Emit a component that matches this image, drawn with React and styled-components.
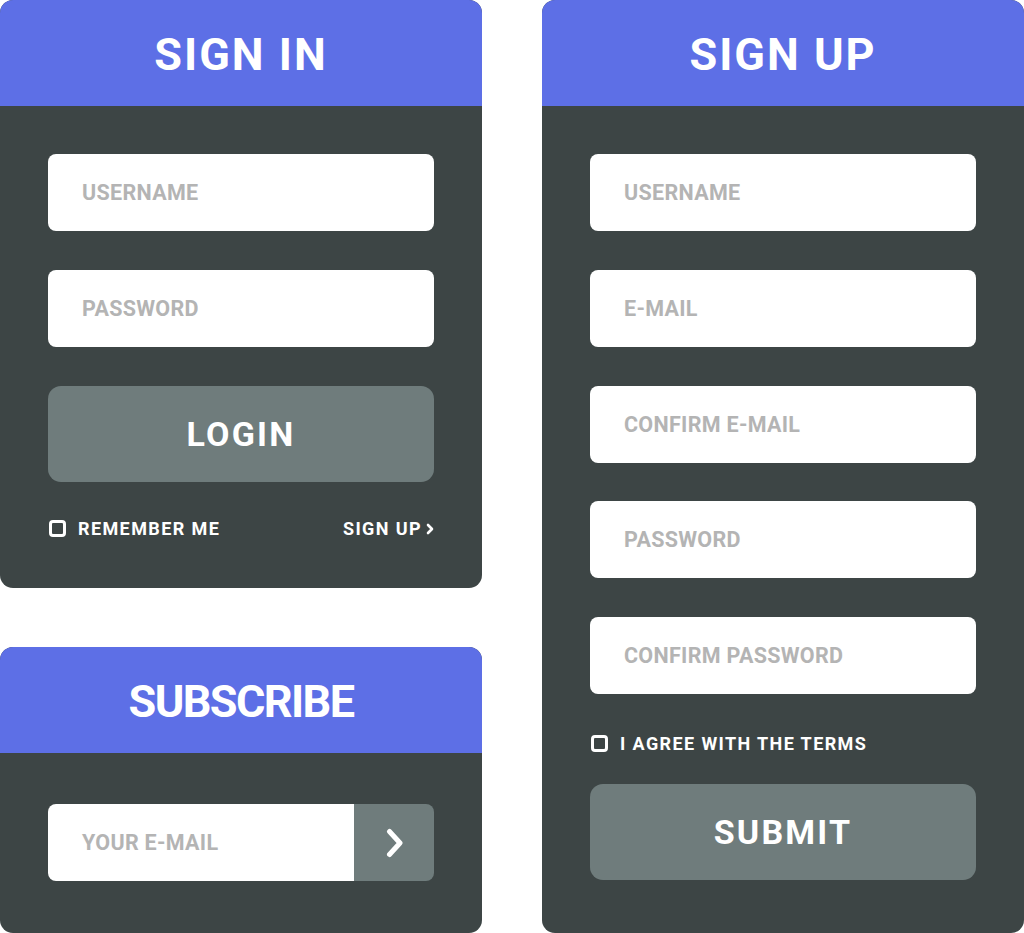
import React from "react";
import styled, { createGlobalStyle } from "styled-components";

const Global = createGlobalStyle`
  html, body { margin: 0; padding: 0; background: #ffffff; }
  body { font-family: Roboto, "Liberation Sans", Arial, sans-serif; }
  * { box-sizing: border-box; }
`;

const Page = styled.div`
  width: 1024px;
  height: 933px;
  overflow: hidden;
  display: flex;
  gap: 60px;
`;

const Column = styled.div`
  width: 482px;
  display: flex;
  flex-direction: column;
  gap: ${(p) => p.$gap || 0}px;
`;

const Card = styled.section`
  width: 482px;
  height: ${(p) => p.$height}px;
  background: #3d4545;
  border-radius: 13px;
  overflow: hidden;
  display: flex;
  flex-direction: column;
  flex-shrink: 0;
`;

const Header = styled.header`
  height: 106px;
  background: #5d6fe6;
  display: flex;
  align-items: center;
  justify-content: center;
  flex-shrink: 0;
`;

const Title = styled.h1`
  margin: 0;
  color: #ffffff;
  font-family: Roboto, "Liberation Sans", Arial, sans-serif;
  font-weight: 700;
  font-size: 45px;
  letter-spacing: ${(p) => p.$spacing ?? 2}px;
  line-height: 1;
  padding-top: 3px;
`;

const Body = styled.div`
  padding: 48px 48px 0;
  display: flex;
  flex-direction: column;
`;

const Field = styled.div`
  height: 77px;
  background: #ffffff;
  border-radius: 8px;
  display: flex;
  align-items: center;
  padding-left: 34px;
  margin-bottom: 38.75px;
  color: #b4b4b4;
  font-size: 21.5px;
  font-weight: 700;
  letter-spacing: 0.3px;
`;

const Button = styled.div`
  height: 96px;
  background: #6f7c7c;
  border-radius: 13px;
  display: flex;
  align-items: center;
  justify-content: center;
  color: #ffffff;
  font-size: 34px;
  font-weight: 700;
  letter-spacing: 2.2px;
  margin-top: ${(p) => p.$top || 0}px;
`;

const OptionRow = styled.div`
  height: 20px;
  display: flex;
  align-items: center;
  justify-content: space-between;
  margin-top: ${(p) => p.$top || 0}px;
  padding-left: 1px;
`;

const Check = styled.label`
  display: flex;
  align-items: center;
  gap: 12px;
  color: #ffffff;
  font-size: 18px;
  font-weight: 700;
  letter-spacing: 1.4px;
`;

const Box = styled.span`
  width: 17px;
  height: 17px;
  border: 3px solid #ffffff;
  border-radius: 4px;
  display: inline-block;
  flex-shrink: 0;
`;

const LinkText = styled.span`
  display: flex;
  align-items: center;
  gap: 4px;
  color: #ffffff;
  font-size: 18px;
  font-weight: 700;
  letter-spacing: 1.4px;
`;

const SubscribeRow = styled.div`
  height: 77px;
  margin-top: 3px;
  display: flex;
  border-radius: 8px;
  overflow: hidden;
`;

const SubscribeInput = styled.div`
  flex: 1;
  background: #ffffff;
  display: flex;
  align-items: center;
  padding-left: 34px;
  color: #b4b4b4;
  font-size: 21.5px;
  font-weight: 700;
  letter-spacing: 0.3px;
`;

const SubscribeButton = styled.div`
  width: 80px;
  background: #6f7c7c;
  display: flex;
  align-items: center;
  justify-content: center;
  padding-left: 2px;
`;

const SmallChevron = () => (
  <svg width="8" height="12" viewBox="0 0 8 12" fill="none">
    <path
      d="M2 2 L6 6 L2 10"
      stroke="#ffffff"
      strokeWidth="2.6"
      strokeLinecap="round"
      strokeLinejoin="round"
    />
  </svg>
);

const BigChevron = () => (
  <svg width="18" height="30" viewBox="0 0 18 30" fill="none">
    <path
      d="M3.5 3.5 L14 15 L3.5 26.5"
      stroke="#ffffff"
      strokeWidth="5"
      strokeLinecap="round"
      strokeLinejoin="round"
    />
  </svg>
);

export default function App() {
  return (
    <>
      <Global />
      <Page>
        <Column $gap={59}>
          <Card $height={588}>
            <Header>
              <Title $spacing={2}>SIGN IN</Title>
            </Header>
            <Body>
              <Field>USERNAME</Field>
              <Field>PASSWORD</Field>
              <Button>LOGIN</Button>
              <OptionRow $top={37}>
                <Check>
                  <Box />
                  REMEMBER ME
                </Check>
                <LinkText>
                  SIGN UP
                  <SmallChevron />
                </LinkText>
              </OptionRow>
            </Body>
          </Card>
          <Card $height={286}>
            <Header>
              <Title $spacing={-1.6}>SUBSCRIBE</Title>
            </Header>
            <Body>
              <SubscribeRow>
                <SubscribeInput>YOUR E-MAIL</SubscribeInput>
                <SubscribeButton>
                  <BigChevron />
                </SubscribeButton>
              </SubscribeRow>
            </Body>
          </Card>
        </Column>
        <Column>
          <Card $height={933}>
            <Header>
              <Title $spacing={2}>SIGN UP</Title>
            </Header>
            <Body>
              <Field>USERNAME</Field>
              <Field>E-MAIL</Field>
              <Field>CONFIRM E-MAIL</Field>
              <Field>PASSWORD</Field>
              <Field>CONFIRM PASSWORD</Field>
              <OptionRow $top={1}>
                <Check>
                  <Box />
                  I AGREE WITH THE TERMS
                </Check>
              </OptionRow>
              <Button $top={30.5}>SUBMIT</Button>
            </Body>
          </Card>
        </Column>
      </Page>
    </>
  );
}
